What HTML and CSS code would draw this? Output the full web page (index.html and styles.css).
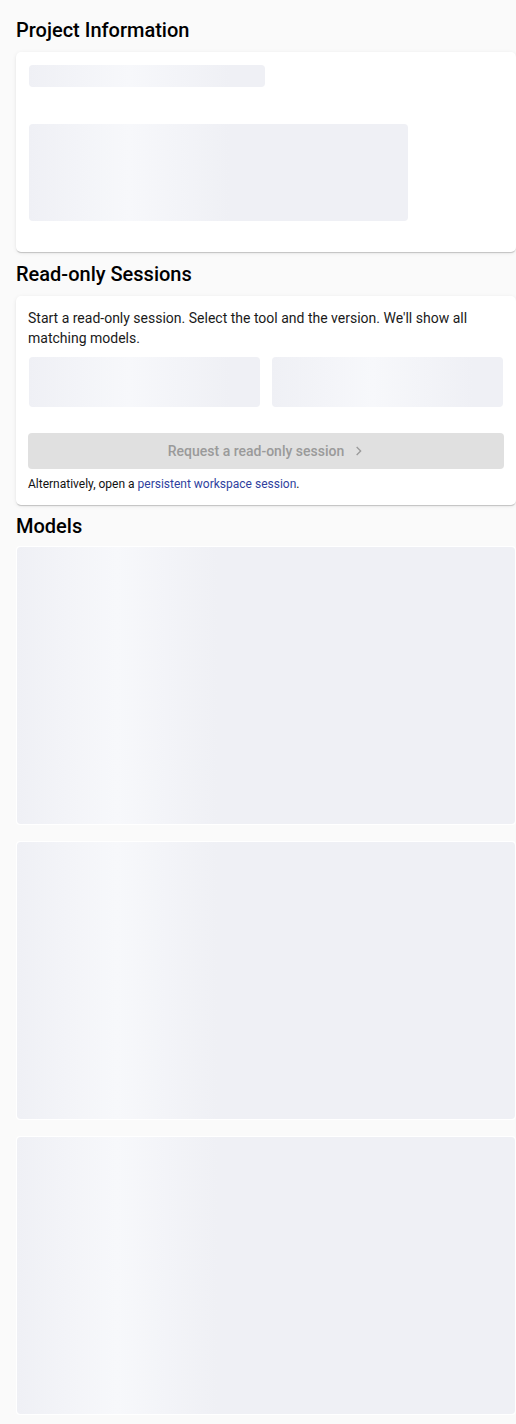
FILE: index.html
```html
<!DOCTYPE html>
<html>
<head>
<meta charset="utf-8">
<link rel="stylesheet" href="styles.css">
</head>
<body>
<main class="page">
  <h2 class="heading heading-first">Project Information</h2>
  <section class="card info-card">
    <div class="skeleton sk-title"></div>
    <div class="skeleton sk-desc"></div>
  </section>

  <h2 class="heading">Read-only Sessions</h2>
  <section class="card session-card">
    <p class="session-text">Start a read-only session. Select the tool and the version. We'll show all matching models.</p>
    <div class="select-row">
      <div class="skeleton sk-select"></div>
      <div class="skeleton sk-select"></div>
    </div>
    <button class="request-btn" disabled>
      <span>Request a read-only session</span>
      <svg class="chev" viewBox="0 0 24 24" width="16" height="16"><path d="M9.3 6.7 10.7 5.3 17.4 12l-6.7 6.7-1.4-1.4 5.3-5.3z" fill="currentColor"/></svg>
    </button>
    <p class="alt-text">Alternatively, open a <a class="link" href="#">persistent workspace session</a>.</p>
  </section>

  <h2 class="heading heading-models">Models</h2>
  <div class="model-list">
    <div class="model-card"><div class="skeleton sk-model"></div></div>
    <div class="model-card"><div class="skeleton sk-model"></div></div>
    <div class="model-card"><div class="skeleton sk-model"></div></div>
  </div>
</main>
</body>
</html>
```

FILE: styles.css
```css
html, body {
  margin: 0;
  padding: 0;
  background: #fafafa;
}
body {
  font-family: Roboto, "Liberation Sans", sans-serif;
  color: #212121;
}
.page {
  padding: 0 0 0 16px;
  display: flex;
  flex-direction: column;
}
.heading {
  font-size: 20px;
  font-weight: 500;
  line-height: 24px;
  color: #000;
  margin: 10px 0 10px;
}
.heading-first {
  margin-top: 18px;
}
.heading-models {
  margin-top: 9px;
  margin-bottom: 8px;
}
.card {
  background: #fff;
  border-radius: 5px;
  box-shadow: 0 2px 1px -1px rgba(0,0,0,0.12), 0 1px 1px 0 rgba(0,0,0,0.08), 0 1px 4px 0 rgba(0,0,0,0.08);
}
.skeleton {
  border-radius: 4px;
  background-color: #eff0f5;
  background-image: linear-gradient(90deg, #eff0f5 0px, #f7f8fb 100px, #eff0f5 200px);
  background-repeat: no-repeat;
  background-size: 200px 100%;
}
.info-card {
  padding: 13px 13px 31px;
  display: flex;
  flex-direction: column;
}
.sk-title {
  width: 236px;
  height: 22px;
}
.sk-desc {
  width: 379px;
  height: 97px;
  margin-top: 37px;
}
.session-card {
  padding: 12px 12px 13px;
}
.session-text {
  margin: 0;
  font-size: 14px;
  line-height: 20px;
  color: #1a1a1a;
}
.select-row {
  display: grid;
  grid-template-columns: 1fr 1fr;
  gap: 10px;
  margin-top: 9px;
}
.sk-select {
  height: 50px;
  margin: 0 1px;
}
.request-btn {
  margin-top: 26px;
  width: 100%;
  height: 36px;
  border: none;
  border-radius: 4px;
  background: #e0e0e0;
  color: #9a9a9a;
  font-family: Roboto, "Liberation Sans", sans-serif;
  font-size: 14px;
  font-weight: 500;
  display: flex;
  align-items: center;
  justify-content: center;
  gap: 6px;
  padding: 0 0 0 2px;
}
.chev {
  display: block;
}
.alt-text {
  margin: 7px 0 0;
  font-size: 12px;
  line-height: 16px;
  color: #111;
}
.link {
  color: #2f3f9e;
  text-decoration: none;
}
.model-list {
  display: flex;
  flex-direction: column;
  gap: 16px;
}
.model-card {
  background: #fff;
  border-radius: 4px;
  padding: 1px;
}
.sk-model {
  height: 277px;
}
```
